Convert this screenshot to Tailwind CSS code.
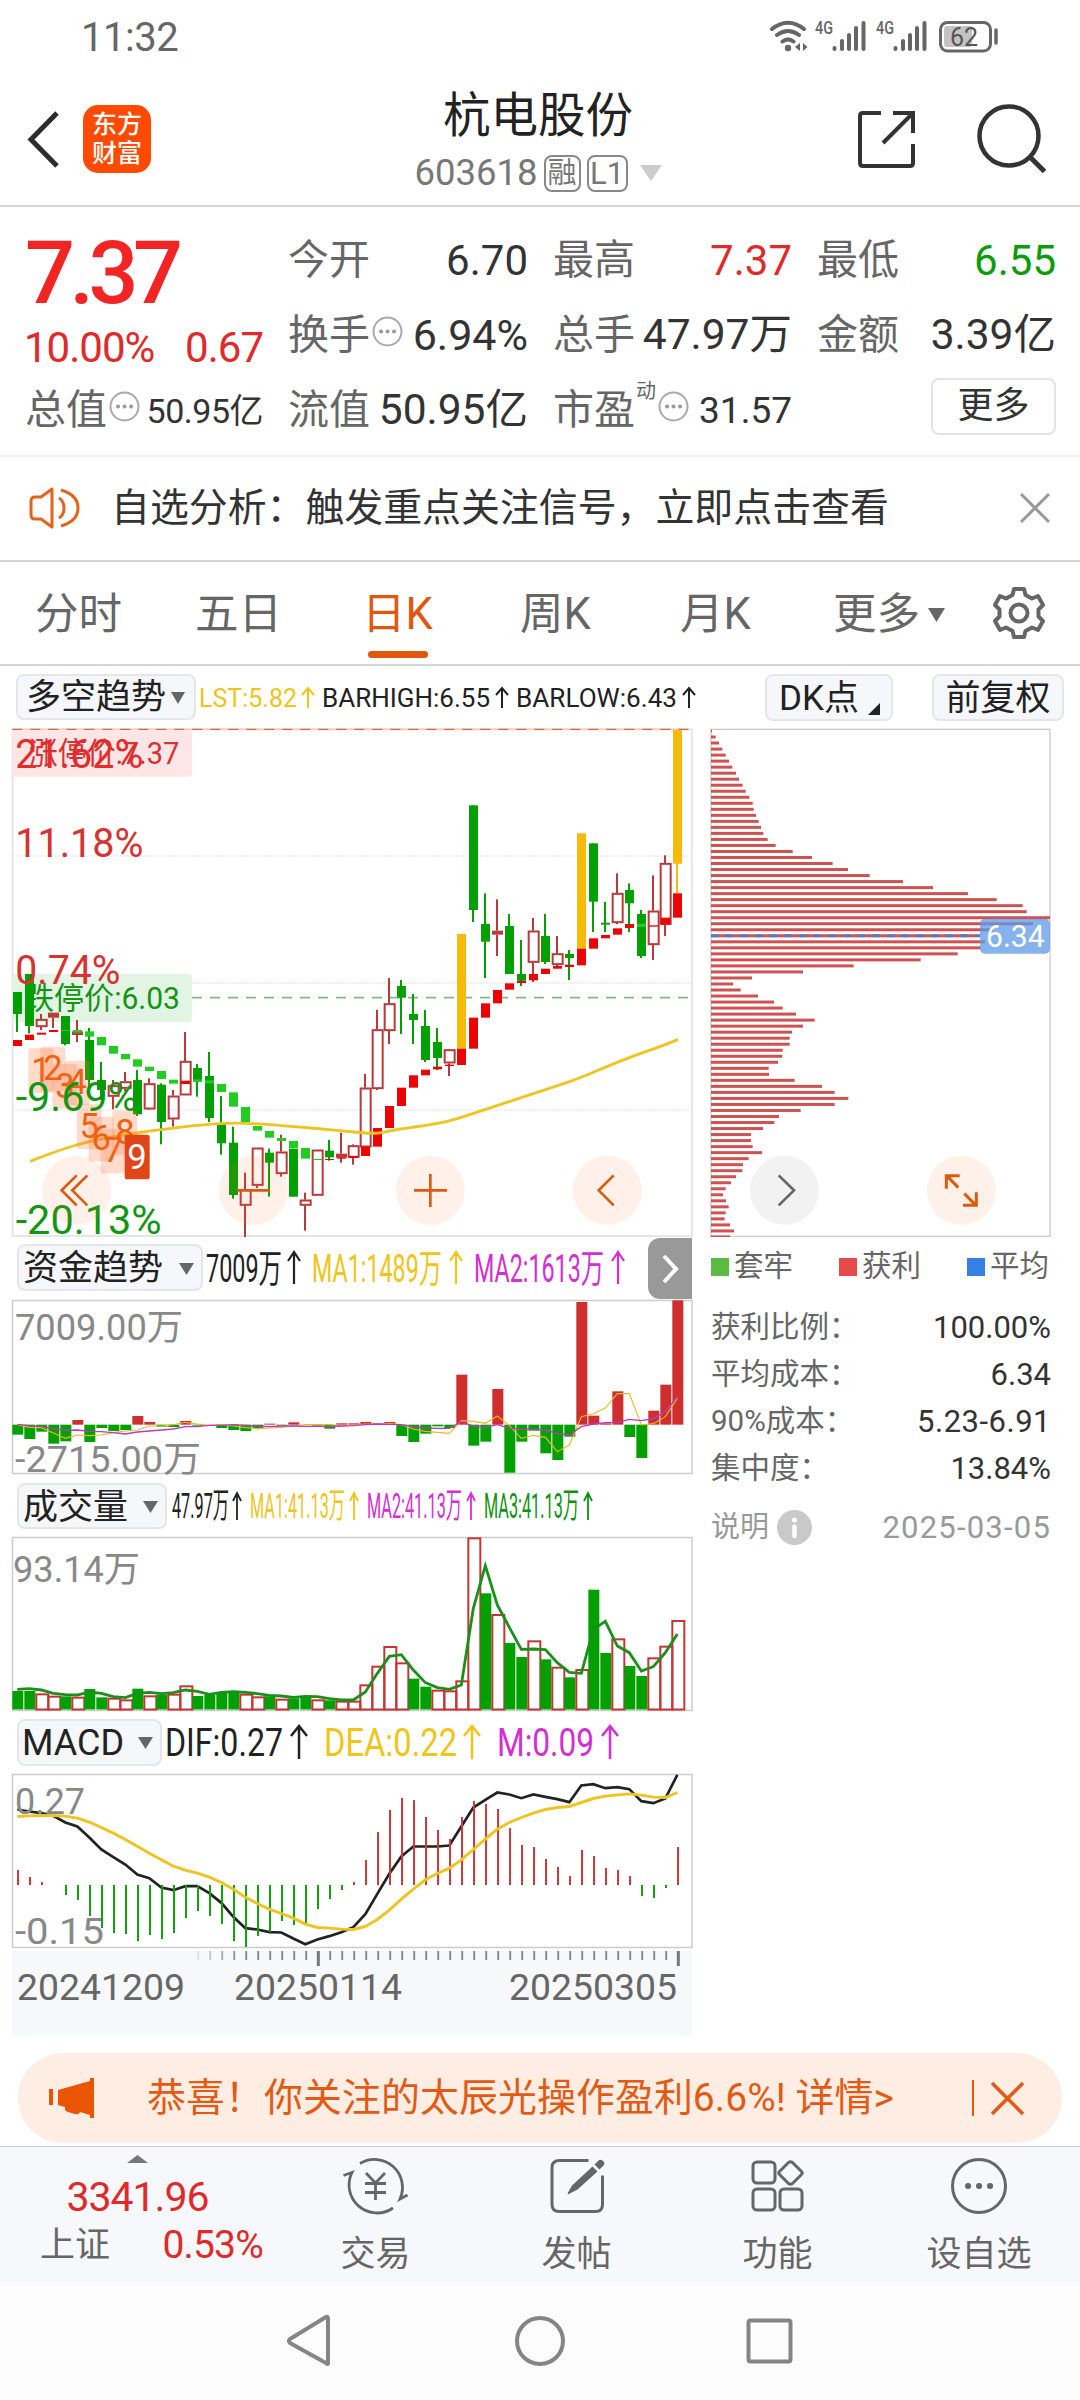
<!DOCTYPE html>
<html lang="zh-CN">
<head>
<meta charset="utf-8">
<title>杭电股份 603618</title>
<script src="https://cdn.jsdelivr.net/npm/@tailwindcss/browser@4"></script>
</head>
<body class="w-[1080px] h-[2400px] overflow-hidden bg-white font-['Roboto','Noto_Sans_CJK_SC',sans-serif] leading-none whitespace-nowrap text-[#333]">
<div class="flex flex-col w-[1080px] h-[2400px]">

<!-- status bar -->
<div class="h-[75px] shrink-0 flex justify-between pl-[81px] pr-[82px] pt-[18px] text-[#666]">
  <span class="text-[40px] tracking-[-0.5px]">11:32</span>
  <svg class="w-[230px] h-[36px]" viewBox="768 18 230 36" fill="none" stroke="#666" stroke-width="4" stroke-linecap="round">
    <path d="M772 29Q788 16.500 804 29M777 35Q788 27 799 35M782.500 41.500Q788 37.500 793.500 41.500"/>
    <circle cx="788" cy="48" r="3.200" fill="#666" stroke="none"/>
    <path d="M800 43v8l-5-4zM803 43v8l4.500-4z" fill="#666" stroke="none"/>
    <path d="M834.500 48v1M842 41v8M849 35v14M856 28v21M863.500 23v26"/>
    <path d="M895.500 48v1M903 41v8M910 35v14M917 28v21M924.500 23v26"/>
    <g fill="#666" stroke="none" font-size="18" font-weight="500"><text x="815" y="34" textLength="18" lengthAdjust="spacingAndGlyphs">4G</text><text x="876" y="34" textLength="18" lengthAdjust="spacingAndGlyphs">4G</text></g>
    <rect x="944" y="26" width="28" height="21" rx="3" fill="#c3c3c3" stroke="none"/>
    <rect x="940.500" y="22.500" width="50" height="28.500" rx="7" stroke-width="3"/>
    <path d="M996 30v13" stroke-width="3.500"/>
    <text x="964" y="45.500" font-size="25" fill="#555" stroke="none" text-anchor="middle">62</text>
  </svg>
</div>

<!-- header -->
<header class="h-[132px] shrink-0 flex items-start justify-between border-b-2 border-[#d6d6d6] pl-[26px] pr-[32px]">
  <div class="flex w-[340px] pt-[30px]">
    <svg class="w-[34px] h-[68px]" viewBox="0 0 34 68" fill="none" stroke="#2d2d2d" stroke-width="5"><path d="M31 8L5 34.500 31 61"/></svg>
    <div class="ml-[23px] size-[68px] rounded-[15px] bg-[#ff4a02] text-white text-[25px] leading-[29px] font-medium flex flex-col items-center justify-center"><span>东方</span><span>财富</span></div>
  </div>
  <div class="flex flex-col items-center pt-[18px] pl-[2px]">
    <h1 class="text-[47.500px] font-normal text-[#222]">杭电股份</h1>
    <div class="flex items-center mt-[14px] text-[36.500px] text-[#777]">
      <span>603618</span>
      <span class="ml-[6px] h-[37px] w-[37px] rounded-[8px] border-2 border-[#888] flex items-center justify-center text-[29px]">融</span>
      <span class="ml-[6px] h-[37px] w-[41px] rounded-[8px] border-2 border-[#888] flex items-center justify-center text-[31px]">L1</span>
      <svg class="ml-[12px] w-[22px] h-[16px]" viewBox="0 0 22 16"><path d="M0 0h22L11 16z" fill="#ccc"/></svg>
    </div>
  </div>
  <div class="flex justify-end w-[340px] pt-[28px] pr-0">
    <svg class="w-[196px] h-[72px]" viewBox="852 103 196 72" fill="none" stroke="#333" stroke-width="4">
      <path d="M881 113h-18q-3 0-3 3v47q0 3 3 3h47q3 0 3-3v-19M893 113h20v20M913 113l-30 30"/>
      <circle cx="1009" cy="136" r="29.500" stroke-width="4.500"/><path d="M1030 157l14.500 14.500" stroke-width="5"/>
    </svg>
  </div>
</header>

<!-- quote -->
<section class="h-[250px] shrink-0 flex justify-between border-b-2 border-[#efefef] pl-[25px] pr-[24px] pt-[16px] text-[41px] text-[#333]">
  <div class="w-[238px] flex flex-col">
    <div class="h-[100px] flex items-center text-[88px] font-medium text-[#f22424] tracking-[-5.5px]">7.37</div>
    <div class="h-[50px] flex items-center justify-between text-[42px] text-[#e02a2a] tracking-[-1px]"><span class="-ml-[1px]">10.00%</span><span>0.67</span></div>
    <div class="h-[75px] flex items-center">
      <span class="text-[#666]">总值</span>
      <svg class="w-[31px] h-[31px] ml-[2px] -mt-[8px]" viewBox="0 0 31 31"><circle cx="15.500" cy="15.500" r="14" fill="none" stroke="#aaa" stroke-width="2"/><path d="M9 15.500h.1M15.500 15.500h.1M22 15.500h.1" stroke="#999" stroke-width="4" stroke-linecap="round"/></svg>
      <span class="ml-auto text-[34px] tracking-[-0.5px]">50.95亿</span>
    </div>
  </div>
  <div class="w-[240px] flex flex-col">
    <div class="h-[75px] flex items-center justify-between"><span class="text-[#666]">今开</span><span class="text-[42px]">6.70</span></div>
    <div class="h-[75px] flex items-center">
      <span class="text-[#666]">换手</span>
      <svg class="w-[31px] h-[31px] ml-[2px] -mt-[8px]" viewBox="0 0 31 31"><circle cx="15.500" cy="15.500" r="14" fill="none" stroke="#aaa" stroke-width="2"/><path d="M9 15.500h.1M15.500 15.500h.1M22 15.500h.1" stroke="#999" stroke-width="4" stroke-linecap="round"/></svg>
      <span class="ml-auto text-[43px]">6.94%</span>
    </div>
    <div class="h-[75px] flex items-center justify-between"><span class="text-[#666]">流值</span><span class="text-[42.500px]">50.95亿</span></div>
  </div>
  <div class="w-[239px] flex flex-col">
    <div class="h-[75px] flex items-center justify-between"><span class="text-[#666]">最高</span><span class="text-[42px] text-[#e02a2a]">7.37</span></div>
    <div class="h-[75px] flex items-center justify-between"><span class="text-[#666]">总手</span><span class="text-[42.500px]">47.97万</span></div>
    <div class="h-[75px] flex items-center">
      <span class="text-[#666]">市盈</span><span class="text-[20px] text-[#666] ml-[1px] -mt-[40px]">动</span>
      <svg class="w-[31px] h-[31px] ml-[2px] -mt-[8px]" viewBox="0 0 31 31"><circle cx="15.500" cy="15.500" r="14" fill="none" stroke="#aaa" stroke-width="2"/><path d="M9 15.500h.1M15.500 15.500h.1M22 15.500h.1" stroke="#999" stroke-width="4" stroke-linecap="round"/></svg>
      <span class="ml-auto text-[37px]">31.57</span>
    </div>
  </div>
  <div class="w-[239px] flex flex-col">
    <div class="h-[75px] flex items-center justify-between"><span class="text-[#666]">最低</span><span class="text-[42px] text-[#0a9c0a]">6.55</span></div>
    <div class="h-[75px] flex items-center justify-between"><span class="text-[#666]">金额</span><span class="text-[42.500px]">3.39亿</span></div>
    <div class="h-[66px] flex items-center justify-end"><span class="w-[125px] h-[57px] rounded-[8px] border-2 border-[#e4e4e4] flex items-center justify-center text-[36px]">更多</span></div>
  </div>
</section>

<!-- signal notice -->
<section class="h-[105px] shrink-0 flex items-center border-b-2 border-[#d6d6d6] pl-[28px] pr-[29px] pb-px">
  <svg class="w-[54px] h-[46px]" viewBox="0 0 54 46" fill="none" stroke="#e2641c" stroke-width="3" stroke-linejoin="round"><path d="M24 4L13 12H7q-4 0-4 4v14q0 4 4 4h6l11 8zM31 13q5 3 5 10t-5 10M33 5q17 5 17 18T33 41"/></svg>
  <span class="ml-[29px] text-[38.9px] text-[#333]">自选分析：触发重点关注信号，立即点击查看</span>
  <svg class="ml-auto w-[32px] h-[32px]" viewBox="0 0 32 32" stroke="#999" stroke-width="3"><path d="M2 2l28 28M30 2L2 30"/></svg>
</section>

<!-- period tabs -->
<nav class="h-[104px] shrink-0 flex items-center border-b-2 border-[#d6d6d6] pl-[35px] pr-[34px] pt-[3px] text-[43.500px] text-[#666]">
  <span class="w-[160px]">分时</span>
  <span class="w-[167px]">五日</span>
  <span class="w-[158px] h-[99px] flex flex-col pt-[28px] text-[#e2570e]">日K<i class="block w-[60px] h-[7px] rounded-full bg-[#e2570e] mt-[14px] ml-[6px]"></i></span>
  <span class="w-[160px]">周K</span>
  <span class="w-[153px]">月K</span>
  <span>更多</span>
  <svg class="ml-[8px] w-[17px] h-[14px]" viewBox="0 0 17 14"><path d="M0 0h17L8.500 14z" fill="#666"/></svg>
  <svg class="ml-auto -mt-[3px] w-[54px] h-[54px]" viewBox="-27 -27 54 54" fill="none" stroke="#666" stroke-width="4" stroke-linejoin="round"><path d="M-5-24H5L6.500-18 13-14.500 19-17 24-8 19.500-3.500V3.500L24 8 19 17 13 14.500 6.500 18 5 24H-5L-6.500 18-13 14.500-19 17-24 8-19.500 3.500V-3.500L-24-8-19-17-13-14.500-6.500-18z"/><circle r="8.500"/></svg>
</nav>

<!-- charts area -->
<main class="h-[1378px] shrink-0 flex flex-col">
  <div class="h-[62px] flex items-start pl-[16px] pr-[16px] pt-[8px] text-[35px] text-[#222]">
    <div class="w-[180px] h-[46px] rounded-[8px] border-2 border-[#e5e6e9] bg-[#f6f7fa] flex items-center pl-[8px] pt-px">多空趋势<svg class="ml-[5px] w-[14px] h-[12px]" viewBox="0 0 14 12"><path d="M0 0h14L7 12z" fill="#666"/></svg></div>
    <svg class="w-[504px] h-[46px]" viewBox="196 674 504 46" font-size="26"><text x="199" y="706.500" fill="#f0c419" textLength="98" lengthAdjust="spacingAndGlyphs">LST:5.82</text><text x="322" y="706.500" fill="#222" textLength="168" lengthAdjust="spacingAndGlyphs">BARHIGH:6.55</text><text x="516" y="706.500" fill="#222" textLength="161" lengthAdjust="spacingAndGlyphs">BARLOW:6.43</text><g fill="none" stroke-width="2"><path stroke="#f0c419" d="M308 708V688M302 695l6-7 6 7"/><path stroke="#222" d="M502 708V688M496 695l6-7 6 7M689 708V688M683 695l6-7 6 7"/></g></svg>
    <div class="ml-auto w-[128px] h-[47px] rounded-[8px] border-2 border-[#e5e6e9] bg-[#f6f7fa] flex items-center pl-[12px] pt-px">DK点<svg class="ml-[9px] mt-[22px] w-[12px] h-[12px]" viewBox="0 0 12 12"><path d="M12 0v12H0z" fill="#222"/></svg></div>
    <div class="ml-[39px] w-[132px] h-[47px] rounded-[8px] border-2 border-[#e5e6e9] bg-[#f6f7fa] flex items-center justify-center pt-px">前复权</div>
  </div>

  <div class="flex">
    <!-- left column of stacked charts -->
    <div class="w-[700px] flex flex-col">
      <svg id="kline" class="w-[700px] h-[509px]" viewBox="0 24 2100 1527"></svg>
      <div class="h-[62px] flex pl-[17px] text-[35px] text-[#222]">
        <div class="mt-[7px] w-[186px] h-[47px] rounded-[8px] border-2 border-[#e5e6e9] bg-[#f6f7fa] flex items-center pl-[4px] pt-[2px]">资金趋势<svg class="ml-[16px] w-[15px] h-[12px]" viewBox="0 0 15 12"><path d="M0 0h15L7.500 12z" fill="#666"/></svg></div>
        <svg class="w-[445px] h-[62px]" viewBox="203 1237 445 62" font-size="39"><text x="206" y="1282" fill="#222" textLength="76" lengthAdjust="spacingAndGlyphs">7009万</text><text x="312" y="1282" fill="#f0c419" textLength="130" lengthAdjust="spacingAndGlyphs">MA1:1489万</text><text x="474" y="1282" fill="#d32fd3" textLength="130" lengthAdjust="spacingAndGlyphs">MA2:1613万</text><g fill="none" stroke-width="2.200"><path stroke="#222" d="M294 1284v-32M288 1261l6-9 6 9"/><path stroke="#f0c419" d="M456 1284v-32M450 1261l6-9 6 9"/><path stroke="#d32fd3" d="M618 1284v-32M612 1261l6-9 6 9"/></g></svg>
        <div class="mt-px w-[44px] h-[61px] rounded-l-[12px] bg-[#999] flex items-center justify-center"><svg class="w-[20px] h-[30px]" viewBox="0 0 20 30" fill="none" stroke="#fff" stroke-width="4"><path d="M4 2l12 13L4 28"/></svg></div>
      </div>
      <svg id="fund" class="w-[700px] h-[176px]" viewBox="0 1299 700 176"></svg>
      <div class="h-[61px] flex pl-[17px] text-[35px] text-[#222]">
        <div class="mt-[8px] w-[150px] h-[46px] rounded-[8px] border-2 border-[#e5e6e9] bg-[#f6f7fa] flex items-center pl-[4px] pt-[2px]">成交量<svg class="ml-[15px] w-[15px] h-[12px]" viewBox="0 0 15 12"><path d="M0 0h15L7.500 12z" fill="#666"/></svg></div>
        <svg class="w-[445px] h-[61px]" viewBox="167 1475 445 61" font-size="35"><text x="172" y="1518" fill="#222" textLength="57" lengthAdjust="spacingAndGlyphs">47.97万</text><text x="250" y="1518" fill="#f0c419" textLength="95" lengthAdjust="spacingAndGlyphs">MA1:41.13万</text><text x="367" y="1518" fill="#d32fd3" textLength="95" lengthAdjust="spacingAndGlyphs">MA2:41.13万</text><text x="484" y="1518" fill="#0f920f" textLength="95" lengthAdjust="spacingAndGlyphs">MA3:41.13万</text><g fill="none" stroke-width="1.800"><path stroke="#222" d="M237 1520v-27M233 1501l4-8 4 8"/><path stroke="#f0c419" d="M354 1520v-27M350 1501l4-8 4 8"/><path stroke="#d32fd3" d="M471 1520v-27M467 1501l4-8 4 8"/><path stroke="#0f920f" d="M588 1520v-27M584 1501l4-8 4 8"/></g></svg>
      </div>
      <svg id="vol" class="w-[700px] h-[176px]" viewBox="0 1536 700 176"></svg>
      <div class="h-[61px] flex pl-[17px] text-[36px] text-[#222]">
        <div class="mt-[7px] w-[145px] h-[47px] rounded-[8px] border-2 border-[#e5e6e9] bg-[#f6f7fa] flex items-center pl-[3px]"><span>MACD</span><svg class="ml-[14px] w-[15px] h-[12px]" viewBox="0 0 15 12"><path d="M0 0h15L7.500 12z" fill="#666"/></svg></div>
        <svg class="w-[470px] h-[61px]" viewBox="162 1712 470 61" font-size="39"><text x="165" y="1756" fill="#222" textLength="118" lengthAdjust="spacingAndGlyphs">DIF:0.27</text><text x="324" y="1756" fill="#f0c419" textLength="133" lengthAdjust="spacingAndGlyphs">DEA:0.22</text><text x="497" y="1756" fill="#d32fd3" textLength="97" lengthAdjust="spacingAndGlyphs">M:0.09</text><g fill="none" stroke-width="2.500"><path stroke="#222" d="M299 1759v-33M291 1736l8-10 8 10"/><path stroke="#f0c419" d="M472 1759v-33M464 1736l8-10 8 10"/><path stroke="#d32fd3" d="M610 1759v-33M602 1736l8-10 8 10"/></g></svg>
      </div>
      <svg id="macd" class="w-[700px] h-[178px]" viewBox="0 1773 700 178"></svg>
      <div class="ml-[12px] w-[680px] h-[84px] bg-[#f7f8fa]"><svg id="axis" class="w-[680px] h-[84px]" viewBox="12 1951 680 84"></svg></div>
    </div>

    <!-- cost distribution -->
    <div class="w-[380px] flex flex-col">
      <svg id="chips" class="w-[380px] h-[509px]" viewBox="30 24 1140 1527"></svg>
      <div class="flex justify-between items-center pl-[11px] pr-[31px] mt-[15px] h-[30px] text-[29.500px] text-[#666]">
        <span class="flex items-center gap-[5px]"><i class="size-[18px] bg-[#5cb944]"></i>套牢</span>
        <span class="flex items-center gap-[5px]"><i class="size-[18px] bg-[#e84a4a]"></i>获利</span>
        <span class="flex items-center gap-[5px]"><i class="size-[18px] bg-[#3580e2]"></i>平均</span>
      </div>
      <dl class="mt-[22px] pl-[11px] pr-[29px] text-[29.500px] text-[#333]">
        <div class="h-[47px] flex items-center justify-between"><dt class="text-[#666]">获利比例：</dt><dd class="text-[31px]">100.00%</dd></div>
        <div class="h-[47px] flex items-center justify-between"><dt class="text-[#666]">平均成本：</dt><dd class="text-[31px]">6.34</dd></div>
        <div class="h-[47px] flex items-center justify-between"><dt class="text-[#666]">90%成本：</dt><dd class="text-[31px] tracking-[0.5px]">5.23-6.91</dd></div>
        <div class="h-[47px] flex items-center justify-between"><dt class="text-[#666]">集中度：</dt><dd class="text-[31px]">13.84%</dd></div>
      </dl>
      <div class="mt-[12px] h-[46px] pl-[11px] pr-[29px] flex items-center text-[29px] text-[#999]">
        <span>说明</span>
        <svg class="ml-[8px] w-[35px] h-[35px]" viewBox="0 0 35 35"><circle cx="17.500" cy="17.500" r="17.500" fill="#c9c9c9"/><circle cx="17.500" cy="10" r="2.600" fill="#fff"/><path d="M17.500 16.500v9.500" stroke="#fff" stroke-width="4.500" stroke-linecap="round"/></svg>
        <span class="ml-auto text-[31px] tracking-[1.2px]">2025-03-05</span>
      </div>
    </div>
  </div>
</main>

<!-- promotion -->
<div class="h-[102px] shrink-0 px-[18px] pt-[9px]">
  <div class="h-[90px] rounded-full bg-[#fdede3] flex items-center pl-[29px] pr-[38px] text-[#e25a14]">
    <svg class="w-[48px] h-[42px]" viewBox="46 2077 48 42" fill="#e95504"><path d="M48 2089h4v16h-4zM57 2090l32-9v-3h4v40h-4v-3l-10-3q-1 3-5 2l-7-2q-4-1-3-5l-7-2z"/></svg>
    <span class="ml-[52px] text-[38.900px] tracking-[0.100px]">恭喜！你关注的太辰光操作盈利6.6%! 详情&gt;</span>
    <i class="ml-auto w-[2px] h-[36px] bg-[#e25a14]"></i>
    <svg class="ml-[17px] w-[33px] h-[33px]" viewBox="0 0 33 33" stroke="#e25a14" stroke-width="3.500"><path d="M1 1l31 31M32 1L1 32"/></svg>
  </div>
</div>

<!-- bottom toolbar -->
<footer class="h-[136px] shrink-0 border-t border-[#cfd2d6] bg-[#f7f8fb] flex text-[35px] text-[#666]">
  <div class="w-[275px] flex flex-col items-center pt-[8px]">
    <svg class="w-[21px] h-[8px]" viewBox="0 0 21 8"><path d="M0 8h21L10.500 0z" fill="#777"/></svg>
    <span class="mt-[14px] text-[41px] text-[#e02a2a] tracking-[-1px]">3341.96</span>
    <span class="mt-[8px] flex items-center w-[223px] justify-between ml-[28px]"><span>上证</span><span class="text-[39px] text-[#e02a2a] tracking-[-0.8px]">0.53%</span></span>
  </div>
  <div class="w-[201px] flex flex-col items-center pt-[9px]">
    <svg class="w-[68px] h-[60px]" viewBox="342 2156 68 60" fill="none" stroke="#666" stroke-width="2.800"><path d="M360 2163.500A28 28 0 0 1 400 2199l7.500-4M393 2208A28 28 0 0 1 352 2172.500l-8.500 3"/><path d="M366 2173l9.500 10 9.500-10M375.500 2183v17M365 2183.500h21M365 2192.500h21"/></svg>
    <span class="mt-[21px]">交易</span>
  </div>
  <div class="w-[201px] flex flex-col items-center pt-[9px]">
    <svg class="w-[60px] h-[60px]" viewBox="547 2156 60 60" fill="none" stroke="#666" stroke-width="3"><path d="M588.500 2160.500h-29q-7.500 0-7.500 7v37q0 7 7.500 7h36q7 0 7-7v-29"/><path d="M592.500 2166.500l5 5-20 18-9.500 5q-.8-.5 0-2l4-7zM594.500 2164.500l4-4q2-1.500 4.500.5t.5 4.500l-4 4z" fill="#666" stroke="none"/></svg>
    <span class="mt-[21px]">发帖</span>
  </div>
  <div class="w-[201px] flex flex-col items-center pt-[9px]">
    <svg class="w-[60px] h-[60px]" viewBox="749 2156 60 60" fill="none" stroke="#666" stroke-width="3" stroke-linejoin="round"><rect x="754" y="2162" width="22" height="21" rx="4"/><rect x="754" y="2189" width="22" height="21" rx="4"/><rect x="781" y="2189" width="22" height="21" rx="4"/><path d="M789.500 2162.500l-9 9q-1.500 1.500 0 3l9 9q2 1.500 4 0l9-9q1.500-1.500 0-3l-9-9q-2-1.500-4 0z"/></svg>
    <span class="mt-[21px]">功能</span>
  </div>
  <div class="w-[202px] flex flex-col items-center pt-[9px]">
    <svg class="w-[60px] h-[60px]" viewBox="0 0 60 60" fill="none" stroke="#666" stroke-width="3"><circle cx="30" cy="30" r="26.500"/><path d="M19 30h.1M30 30h.1M41 30h.1" stroke-width="6" stroke-linecap="round"/></svg>
    <span class="mt-[21px]">设自选</span>
  </div>
</footer>

<!-- system navigation -->
<div class="h-[118px] shrink-0 bg-[#fcfcfc] flex justify-center pt-[31px]">
  <svg class="w-[520px] h-[56px]" viewBox="280 2313 520 56" fill="none" stroke="#858585" stroke-width="4" stroke-linejoin="round"><path d="M328 2319v44q0 2-2 0l-36-20q-2-2 0-4l36-22q2-1 2 2z"/><circle cx="540" cy="2341" r="23"/><rect x="748.500" y="2320.500" width="42" height="41" rx="2"/></svg>
</div>
</div>

<script>
const RED='#b93a3a', GREEN='#03a003', YEL='#f6bb08', HOT='#ec0303', LIME='#22cc22';
const R=(x,y,w,h,f,extra='')=>`<rect x="${x}" y="${y}" width="${w}" height="${h}" fill="${f}" ${extra}/>`;
const T=(x,y,s,f,len,t,extra='')=>`<text x="${x}" y="${y}" font-size="${s}" fill="${f}" textLength="${len}" lengthAdjust="spacingAndGlyphs" ${extra}>${t}</text>`;
const put=(id,s)=>document.getElementById(id).innerHTML=s;

// candles: kind, body top, body bottom, high, low
const K=[['g',816,882,816,936],['g',762,918,762,940],['r',897,921,882,930],['r',878,893,878,924],['g',888,972,888,976],['r',934,945,900,966],['g',960,1080,924,1098],['g',1080,1110,1026,1140],['r',1096,1130,1080,1168],['r',1084,1106,1056,1115],['g',1080,1183,1050,1188],['r',1090,1168,1075,1170],['g',1094,1206,1090,1273],['r',1127,1198,1110,1220],['r',1023,1126,936,1126],['g',1044,1085,1032,1130],['g',1068,1194,996,1206],['g',1212,1270,1128,1304],['g',1268,1425,1220,1436],['r',1408,1457,1358,1551],['r',1283,1397,1283,1404],['g',1298,1328,1286,1430],['r',1295,1362,1244,1370],['g',1286,1430,1286,1430],['r',1439,1457,1418,1532],['r',1289,1427,1289,1427],['g',1292,1312,1260,1322],['r',1301,1313,1238,1328],['r',1276,1313,1273,1334],['r',1103,1282,1062,1282],['r',928,1107,870,1110],['r',850,933,774,972],['g',798,833,780,942],['g',882,900,822,972],['g',918,1020,870,1026],['g',966,1014,924,1050],['r',988,1030,988,1068],['y',642,986,642,986],['g',256,570,256,606],['g',612,665,520,774],['r',632,644,538,708],['g',618,762,582,762],['g',762,782,660,798],['r',632,728,594,786],['g',648,726,582,732],['r',700,735,648,745],['g',702,714,690,780],['y',340,686,340,686],['g',370,545,370,636],['g',608,614,546,636],['r',519,609,460,612],['g',510,550,490,636],['g',582,708,570,714],['r',572,675,466,720],['r',429,614,406,648],['y',30,431,30,520]];
const B=[['r',960,978],['r',944,960],['r',938,944],['r',930,936],['l',930,933],['l',930,938],['l',934,950],['l',951,976],['l',978,1001],['l',1002,1018],['l',1018,1040],['l',1040,1053],['l',1053,1077],['l',1079,1091],['r',1082,1092],['l',1078,1085],['l',1081,1090],['l',1092,1116],['l',1117,1160],['l',1161,1207],['l',1218,1232],['l',1233,1253],['l',1254,1263],['l',1263,1284],['l',1284,1316],['l',1317,1320],['r',1317,1320],['r',1312,1316],['r',1308,1314],['r',1280,1308],['r',1224,1280],['r',1158,1224],['r',1103,1158],['r',1066,1103],['r',1049,1066],['r',1040,1048],['r',1034,1038],['r',986,1035],['r',893,986],['r',850,893],['r',810,850],['r',790,809],['r',782,789],['r',762,781],['r',746,762],['r',738,746],['r',734,741],['r',686,736],['r',655,686],['r',645,655],['r',625,644],['r',612,624],['l',611,621],['r',616,620],['r',593,614],['r',520,593]];
const disc=(cx,f,s,d,w=8)=>`<circle cx="${cx}" cy="1411" r="103.500" fill="${f}"/><path d="${d}" fill="none" stroke="${s}" stroke-width="${w}"/>`;
const PE='rgba(255,110,40,.1)', OR='#d95b10';
let s='<rect x="37.500" y="28" width="2038" height="1520" fill="none" stroke="#e2e2e2" stroke-width="5"/>';
[408,789,1170].forEach(y=>s+=`<path d="M37 ${y}H2077" stroke="#dedede" stroke-width="4" stroke-dasharray="4 5"/>`);
s+='<path d="M37 28H2065" stroke="#f3cfc0" stroke-width="5"/><path d="M37 28H2065" stroke="#c8704f" stroke-width="3.500" stroke-dasharray="30 24"/><path d="M576 833H2065" stroke="#7fbd86" stroke-width="5" stroke-dasharray="30 24"/>';
s+='<path d="M37 30H564q12 0 12 12V158q0 12-12 12H37z" fill="#fee6e6"/>'+T(86,132,92,'#d43333',452,'涨停价:7.37');
s+='<path d="M37 762H564q12 0 12 12V894q0 12-12 12H37z" fill="#e2f4e3"/>'+T(72,866,92,'#149414',468,'跌停价:6.03');
K.forEach((k,i)=>{const x=52+36*i,[c,t,b,h,l]=k;
  const col=c=='g'?GREEN:c=='y'?YEL:RED;
  if(c=='r'){ if(h<t)s+=R(x-4,h,6,t-h,col); if(l>b)s+=R(x-4,b,6,l-b,col);
    s+= b-t<16?R(x-16,t,33,b-t,col):`<rect x="${x-14}" y="${t+2.500}" width="30" height="${b-t-5}" fill="none" stroke="${col}" stroke-width="6"/>`;
  } else s+=R(x-4,h,6,l-h,col)+R(x-13,t,27,b-t,col);
});
B.forEach((b,i)=>{s+=R(52+36*i-13,b[1],27,b[2]-b[1],b[0]=='r'?HOT:LIME)});
s+='<path d="M90 1324C140 1304 190 1286 240 1272S330 1250 430 1236 580 1216 660 1211 780 1212 860 1218 960 1226 1060 1236 1150 1234 1200 1227 1310 1213 1350 1202 1420 1180 1500 1154 1640 1108 1700 1088 1800 1046 1890 1012 1980 982 2034 958" fill="none" stroke="#efc420" stroke-width="8.500"/>';
[[85,985],[121,980],[157,1032],[194,1022],[230,1153],[266,1190],[302,1226],[337,1172]].forEach((p,i)=>{s+=R(p[0],p[1],75,134,'rgba(255,110,50,.25)','rx="8"')+`<text x="${p[0]+38}" y="${p[1]+101}" font-size="104" fill="#f0600e" text-anchor="middle">${i+1}</text>`});
s+=R(374,1244,75,134,'#e04418','rx="8"')+'<text x="411" y="1346" font-size="104" fill="#fff" text-anchor="middle">9</text>';
s+=T(46,145,122,'#e62b2b',384,'21.62%')+T(46,412,122,'#d93030',384,'11.18%')+T(46,793,122,'#d93030',315,'0.74%')+T(47,1173,122,'#119611',367,'-9.69%')+T(47,1542,122,'#119611',438,'-20.13%');
s+=disc(230,PE,OR,'M230 1366l-45 45 45 45M262 1366l-45 45 45 45')+disc(760,PE,OR,'M711 1411h99')+disc(1291,PE,OR,'M1242 1411h99M1291 1362v99')+disc(1822,PE,OR,'M1841 1366l-45 45 45 45');
put('kline',s);

// cost distribution bars, right edge of each
const C=[66,77,87,97,107,117,127,138,147,158,167,178,188,191,198,206,213,220,233,257,308,366,428,474,539,639,729,834,920,998,1010,1080,1029,910,860,885,872,803,692,491,339,186,129,152,204,252,278,318,374,339,306,299,299,278,277,264,236,237,314,396,434,475,434,332,267,253,219,183,183,188,216,176,159,157,138,123,107,99,108,116,107,104,120,132,120];
s='<rect x="63" y="28" width="1017" height="1521" fill="none" stroke="#ccc" stroke-width="4"/>';
C.forEach((e,i)=>s+=R(63,28.500+18.070*i,e-63,9,'#cf5252'));
s+='<path d="M63 647H870" stroke="#4f7cd0" stroke-width="9" stroke-dasharray="22 22"/>'+R(870,596,210,105,'rgba(93,153,229,.75)','rx="15"')+T(888,680,92,'#fff',176,'6.34');
s+=disc(283,'#f2f2f2','#666','M266 1366l46 45-46 45')+disc(814,'#fef1ea','#de5a0c','M769 1406v-39h40M770 1367l35 36M859 1417v39h-40M858 1456l-35-35',9);
put('chips',s);

const X=i=>17.330+12*i;
const frame=y=>`<rect x="12.500" y="${y}" width="679.500" height="173" fill="none" stroke="#ccc" stroke-width="1.500"/>`;
const line=(a,y0,c,w)=>`<polyline points="${a.map((v,i)=>X(i)+','+(y0+v/3)).join(' ')}" fill="none" stroke="${c}" stroke-width="${w}"/>`;

const F=[614,627,605,641,634,570,636,594,603,600,558,576,590,591,573,587,584,594,600,603,594,581,587,577,584,587,596,580,580,576,580,576,618,636,611,589,594,434,647,635,477,728,635,602,670,690,620,216,557,580,484,621,684,542,464,211];
s=frame(1300.5)+T(15,1340,36,'#888',168,'7009.00万')+T(15,1472,36,'#888',186,'-2715.00万');
F.forEach((v,i)=>{const a=Math.min(v,584),h=Math.abs(v-584);s+=R(X(i)-5,1230+a/3,11,h/3,v<584?'#cf2e2e':GREEN)});
s+=line([584,592,593,609,625,615,617,615,608,603,600,588,588,584,577,582,586,584,588,593,596,594,592,588,584,584,584,588,585,582,582,580,584,597,604,607,610,572,574,580,558,587,625,616,622,665,645,560,551,534,491,491,585,581,560,505],1230,'#e8bb20',1.1);
s+=line([583,587,590,596,601,600,604,605,608,612,606,603,600,597,590,590,586,586,584,586,588,590,588,588,589,589,590,588,587,584,582,583,584,590,594,595,595,575,588,592,584,595,598,598,600,610,615,590,582,578,577,568,572,566,545,500],1230,'#bb3ac0',1.3);
put('fund',s);

const V='g513,g513,r520,r527,g529,r530,g507,g532,r533,r538,g506,r526,g524,r521,r496,g528,g524,g518,g518,r521,r529,g529,r536,g535,g532,r538,g541,r542,r542,r493,r437,r378,r427,g476,g500,r509,r511,r481,r52,g220,r282,g369,g411,r361,g418,r440,g472,r447,g209,g399,r355,g438,g468,r412,r377,r300'.split(',');
s=frame(1537.5)+T(13,1582,36,'#888',127,'93.14万');
V.forEach((q,i)=>{const v=+q.slice(1),y=1520+v/3,h=1709.5-y;s+=q[0]=='g'?R(X(i)-5,y,11,h,GREEN):`<rect x="${X(i)-5}" y="${y+1}" width="12" height="${h-1}" fill="none" stroke="#c63434" stroke-width="2"/>`});
s+=line([508,506,510,520,524,525,516,520,530,533,520,517,521,518,510,514,523,517,515,517,521,526,528,532,529,530,536,540,540,516,460,409,404,450,488,503,508,495,265,137,255,322,388,387,389,428,457,460,328,304,378,398,453,440,398,342],1520,'#1b8f1b',2.8);
put('vol',s);

const M=[330,351,366,375,405,420,468,504,519,522,543,525,537,519,474,453,468,492,543,561,528,516,483,495,492,447,417,390,366,300,216,150,114,120,171,210,237,171,123,132,147,204,255,261,297,321,348,270,288,324,330,348,408,414,384,261];
s=frame(1774.5);
s+=line([147,153,158,166,186,198,231,267,290,312,342,353,381,389,377,377,398,427,469,503,507,515,516,534,551,537,527,515,500,461,400,340,288,258,258,258,255,198,141,118,96,102,113,102,109,116,125,75,71,83,80,86,122,128,114,43],1760.5,'#222',2.7);
s+=T(15,1814,36,'#888',70,'0.27')+T(15,1944,36,'#888',89,'-0.15');
M.forEach((v,i)=>{s+=R(X(i)-.3,1760+Math.min(v,375)/3,2,Math.abs(v-375)/3,v<375?'#c93a3a':'#12a012')});
s+=line([168,166,165,165,167,173,185,201,218,237,257,278,298,317,329,338,350,366,386,410,429,446,459,473,491,501,503,506,507,498,477,449,416,386,358,339,323,298,267,236,206,186,171,158,147,141,138,126,114,107,103,100,104,110,111,96],1760.5,'#efc420',2.9);
put('macd',s);

s='';
for(let i=15;i<56;i++){const big=i==25||i==55;s+=R(X(i)-(big?.5:0),1951,big?3:1.8,big?15:9,'#777',`opacity="${big?1:Math.min(.9,(i-14)*.2)}"`)}
s+=T(17,2000,36.5,'#666',168,'20241209')+T(234,2000,36.5,'#666',168,'20250114')+T(509,2000,36.5,'#666',168,'20250305');
put('axis',s);
</script>
</body>
</html>
